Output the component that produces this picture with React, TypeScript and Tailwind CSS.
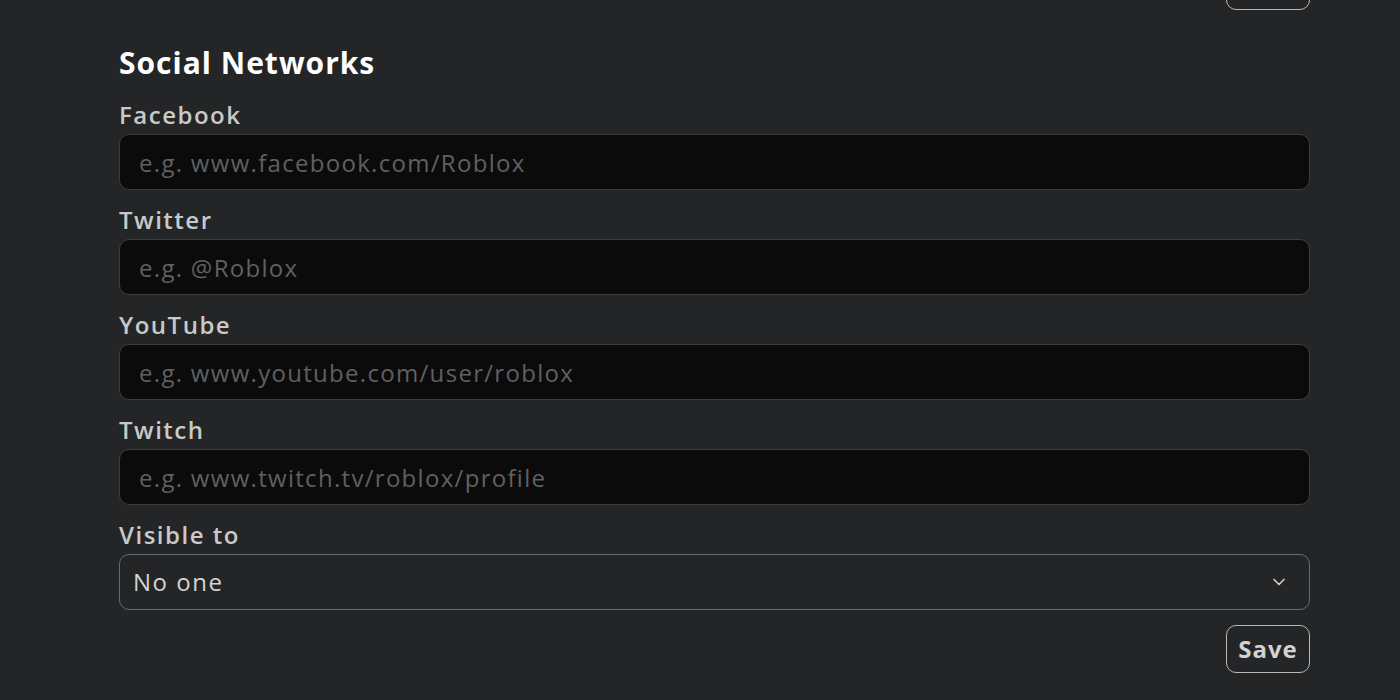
import React from 'react';
import { ChevronDown } from 'lucide-react';

const fields = [
  { label: 'Facebook', placeholder: 'e.g. www.facebook.com/Roblox' },
  { label: 'Twitter', placeholder: 'e.g. @Roblox' },
  { label: 'YouTube', placeholder: 'e.g. www.youtube.com/user/roblox' },
  { label: 'Twitch', placeholder: 'e.g. www.twitch.tv/roblox/profile' },
];

const App: React.FC = () => {
  return (
    <div
      className="w-[1400px] h-[700px] overflow-hidden bg-[#232527] text-[#e6e6e6]"
      style={{ fontFamily: '"Open Sans", sans-serif' }}
    >
      <div className="w-[1191px] ml-[119px] flex flex-col">
        <div className="flex justify-end">
          <div className="w-[84px] h-[48px] -mt-[38px] rounded-[10px] border border-[#b8b8b8]" />
        </div>

        <h2 className="mt-[35px] text-[30px] leading-[36px] font-bold tracking-[1px] text-white">Social Networks</h2>

        <div className="mt-[19px] flex flex-col gap-[15px]">
          {fields.map((f) => (
            <div key={f.label} className="flex flex-col gap-[4px]">
              <label className="text-[24px] leading-[30px] font-semibold tracking-[1.5px] text-[#c9c9c9]">{f.label}</label>
              <input
                placeholder={f.placeholder}
                className="h-[56px] w-full rounded-[10px] border border-[#3a3c3e] bg-[#0b0b0c] px-[19px] text-[24px] tracking-[1.3px] text-[#d0d0d0] placeholder:text-[#5f6061] outline-none"
              />
            </div>
          ))}

          <div className="flex flex-col gap-[4px]">
            <label className="text-[24px] leading-[30px] font-semibold tracking-[1.5px] text-[#c9c9c9]">Visible to</label>
            <div className="h-[56px] w-full rounded-[10px] border border-[#6a6b6d] flex items-center justify-between pl-[13px] pr-[20px]">
              <span className="text-[24px] tracking-[1.5px] text-[#d4d4d4]">No one</span>
              <ChevronDown className="w-[20px] h-[20px] text-[#cfcfcf]" strokeWidth={2} />
            </div>
          </div>
        </div>

        <div className="mt-[15px] flex justify-end">
          <button className="w-[84px] h-[48px] rounded-[10px] border border-[#b8b8b8] text-[24px] font-bold tracking-[1px] text-[#d2d2d2]">
            Save
          </button>
        </div>
      </div>
    </div>
  );
};

export default App;
